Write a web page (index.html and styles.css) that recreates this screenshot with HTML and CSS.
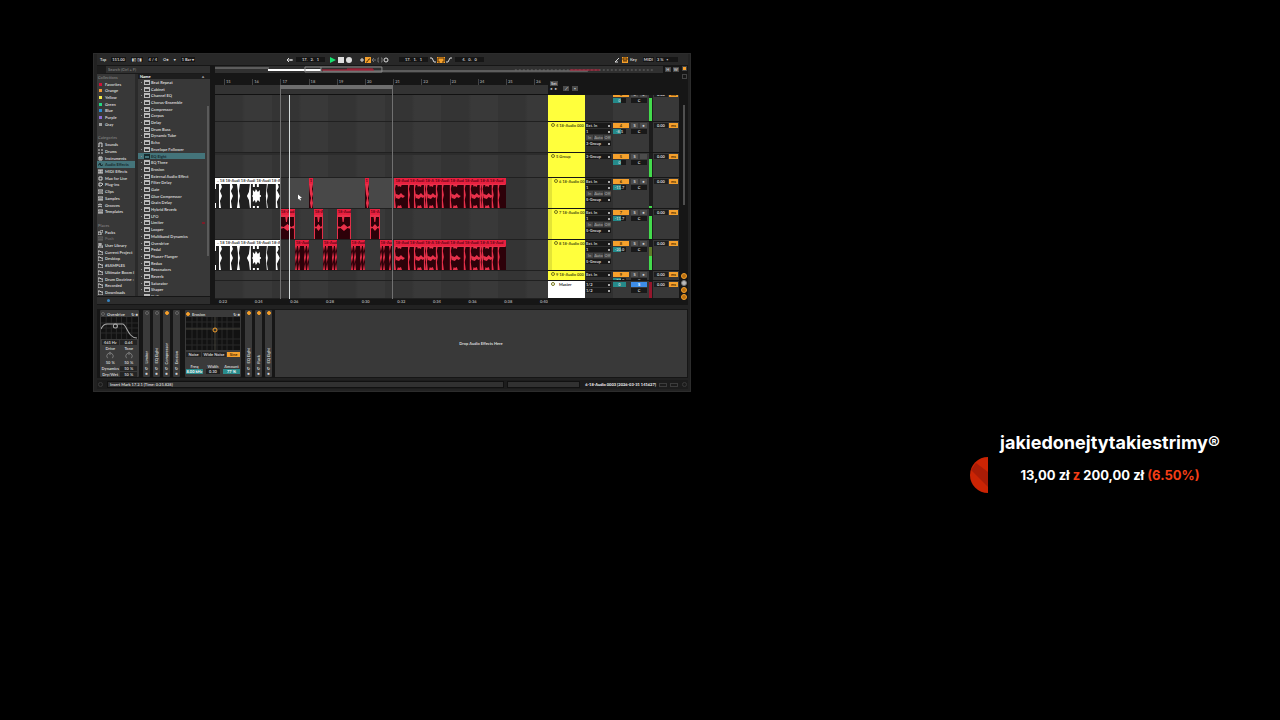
FILE: index.html
```html
<!DOCTYPE html>
<html lang="en">
  <head>
    <meta charset="UTF-8" />
    <meta name="viewport" content="width=device-width, initial-scale=1.0" />
    <title>Stream scene</title>
    <link rel="stylesheet" href="styles.css">
  </head>
  <body>
    <main class="stage">
      <section class="daw">
        <header class="transport">
          <div class="group group-left">
            <button>Tap</button>
            <span class="field">151.00</span>
            <span class="field">▮▯ ▯▮</span>
            <span class="field">4 / 4</span>
            <button>O●</button>
            <span>▾</span>
            <span class="field">1 Bar ▾</span>
          </div>
          <div class="group">
            <button class="tool" aria-label="Follow"><svg viewBox="0 0 6 6"><path d="M0 3h6M2 1L0 3l2 2M4 2v2" /></svg></button>
            <span class="field position">17. &nbsp; 2. &nbsp; 1</span>
            <div class="group play-group">
              <button class="tool" aria-label="Play"><svg viewBox="0 0 6 6"><path class="play" d="M0 0l6 3-6 3z" /></svg></button>
              <button class="tool" aria-label="Stop"><svg viewBox="0 0 6 6"><path class="solid" d="M0 0h6v6H0z" /></svg></button>
              <button class="tool" aria-label="Record"><svg viewBox="0 0 6 6"><circle class="solid" cx="3" cy="3" r="3" /></svg></button>
            </div>
            <div class="group edit-group">
              <button class="tool" aria-label="Overdub"><svg viewBox="0 0 6 6"><path d="M3 1v4M1 3h4" /></svg></button>
              <button class="tool on" aria-label="Automation arm"><svg viewBox="0 0 6 6"><path d="M1 5h1l2-3h1" /></svg></button>
              <button class="tool dim" aria-label="Re-enable"><svg viewBox="0 0 6 6"><path d="M1 3h4M3 1L1 3l2 2" /></svg></button>
              <button class="tool dim" aria-label="Capture"><svg viewBox="0 0 6 6"><path d="M2 1H1v4h1M4 1h1v4H4" /></svg></button>
              <button class="tool" aria-label="Session record"><svg viewBox="0 0 6 6"><circle cx="3" cy="3" r="2" /></svg></button>
            </div>
            <span class="field position loop-start">17. &nbsp; 1. &nbsp; 1</span>
            <div class="group loop-group">
              <button class="tool" aria-label="Punch in"><svg viewBox="0 0 6 6"><path d="M0 1h2l2 4h2" /></svg></button>
              <button class="tool wide on" aria-label="Loop"><svg viewBox="0 0 8 6"><path d="M3 5H1V1h6v4H5" /></svg></button>
              <button class="tool" aria-label="Punch out"><svg viewBox="0 0 6 6"><path d="M0 5h2l2-4h2" /></svg></button>
            </div>
            <span class="field position">4. &nbsp; 0. &nbsp; 0</span>
          </div>
          <div class="group group-right">
            <button class="tool" aria-label="Draw"><svg viewBox="0 0 6 6"><path d="M1 5l4-4M1 5h3" /></svg></button>
            <button class="tool on" aria-label="Computer keyboard"><svg viewBox="0 0 6 6"><path d="M1 1h4v2H1zM2 3v2M4 3v2" /></svg></button>
            <button>Key</button>
            <button class="field midi">MIDI</button>
            <span class="field cpu">3 % &nbsp; ▪</span>
          </div>
        </header>

        <div class="workspace">
          <aside class="browser">
            <input class="search" type="search" aria-label="Search" placeholder="Search (Ctrl + F)">
            <div class="browser-lists">
              <ul class="places">
                <li class="title">Collections</li>
                <li class="c-red"><a href="#">Favorites</a></li>
                <li class="c-orange"><a href="#">Orange</a></li>
                <li class="c-yellow"><a href="#">Yellow</a></li>
                <li class="c-green"><a href="#">Green</a></li>
                <li class="c-blue"><a href="#">Blue</a></li>
                <li class="c-purple"><a href="#">Purple</a></li>
                <li class="c-gray"><a href="#">Gray</a></li>
                <li></li>
                <li class="title">Categories</li>
                <li data-icon="note"><a href="#">Sounds</a></li>
                <li data-icon="pads"><a href="#">Drums</a></li>
                <li data-icon="clock"><a href="#">Instruments</a></li>
                <li data-icon="wave" class="selected"><a href="#">Audio Effects</a></li>
                <li data-icon="keys"><a href="#">MIDI Effects</a></li>
                <li data-icon="disc"><a href="#">Max for Live</a></li>
                <li data-icon="plug"><a href="#">Plug-ins</a></li>
                <li data-icon="clip"><a href="#">Clips</a></li>
                <li data-icon="sample"><a href="#">Samples</a></li>
                <li data-icon="groove"><a href="#">Grooves</a></li>
                <li data-icon="sample"><a href="#">Templates</a></li>
                <li></li>
                <li class="title">Places</li>
                <li data-icon="packs"><a href="#">Packs</a></li>
                <li data-icon="sample" class="off"><a href="#">Push</a></li>
                <li data-icon="user"><a href="#">User Library</a></li>
                <li data-icon="folder"><a href="#">Current Project</a></li>
                <li data-icon="folder"><a href="#">Desktop</a></li>
                <li data-icon="folder"><a href="#">#SAMPLES</a></li>
                <li data-icon="folder"><a href="#">Ultimate Boom I</a></li>
                <li data-icon="folder"><a href="#">Drum Doctrine :</a></li>
                <li data-icon="folder"><a href="#">Recorded</a></li>
                <li data-icon="folder"><a href="#">Downloads</a></li>
              </ul>
              <div class="results">
                <div class="results-head"><span>Name</span><span>▵</span></div>
                <ul class="devices-list">
                  <li><a href="#">Beat Repeat</a></li>
                  <li><a href="#">Cabinet</a></li>
                  <li><a href="#">Channel EQ</a></li>
                  <li><a href="#">Chorus-Ensemble</a></li>
                  <li><a href="#">Compressor</a></li>
                  <li><a href="#">Corpus</a></li>
                  <li><a href="#">Delay</a></li>
                  <li><a href="#">Drum Buss</a></li>
                  <li><a href="#">Dynamic Tube</a></li>
                  <li><a href="#">Echo</a></li>
                  <li><a href="#">Envelope Follower</a></li>
                  <li class="selected"><a href="#">EQ Eight</a></li>
                  <li><a href="#">EQ Three</a></li>
                  <li><a href="#">Erosion</a></li>
                  <li><a href="#">External Audio Effect</a></li>
                  <li><a href="#">Filter Delay</a></li>
                  <li><a href="#">Gate</a></li>
                  <li><a href="#">Glue Compressor</a></li>
                  <li><a href="#">Grain Delay</a></li>
                  <li><a href="#">Hybrid Reverb</a></li>
                  <li><a href="#">LFO</a></li>
                  <li class="favorite"><a href="#">Limiter</a></li>
                  <li><a href="#">Looper</a></li>
                  <li><a href="#">Multiband Dynamics</a></li>
                  <li><a href="#">Overdrive</a></li>
                  <li><a href="#">Pedal</a></li>
                  <li><a href="#">Phaser-Flanger</a></li>
                  <li><a href="#">Redux</a></li>
                  <li><a href="#">Resonators</a></li>
                  <li><a href="#">Reverb</a></li>
                  <li><a href="#">Saturator</a></li>
                  <li><a href="#">Shaper</a></li>
                  <li><a href="#">Shifter</a></li>
                </ul>
              </div>
            </div>
            <div class="preview"><button class="headphone" aria-label="Preview"></button></div>
          </aside>

          <div class="arrangement">
            <div class="overview-row">
              <svg class="overview" viewBox="0 0 448 7" preserveAspectRatio="none">
                <path class="o-line" d="M0 2h54M108 5h36M144 5h229" />
                <path class="o-dots" d="M300 4h140" />
                <path class="o-white" d="M53 4h53" />
                <path class="o-red" d="M107 4h52M132 3h26M355 4h30" />
                <path class="o-frame" d="M90 1h77v5H90zM106 1v5" />
              </svg>
              <button class="mini">H</button>
              <button class="mini">W</button>
            </div>
            <div class="timeline-row">
              <div class="timeline">
                <div class="bars" id="bars"></div>
                <div class="loop-strip"><div class="loop-brace"></div></div>
                <div class="lanes" id="lanes">
                  <div class="loop-area"></div>
                  <div class="playhead"></div>
                  <svg class="pointer" viewBox="0 0 8 12"><path d="M0 0v10l2-2 2 4 2-1-2-4h4z" /></svg>
                </div>
                <div class="seconds" id="seconds"></div>
              </div>
              <div class="mixer">
                <div class="mixer-head">
                  <button class="mini set">Set</button>
                  <div class="locators">
                    <button>◂</button><button>▸</button>
                    <button class="mini pencil">⟋</button><button class="mini">▪</button>
                  </div>
                </div>
                <div class="tracks" id="tracks"></div>
              </div>
            </div>
          </div>

          <div class="rail">
            <div class="rail-top">
              <button class="square on" aria-label="Arrangement view"></button>
              <button class="square" aria-label="Session view"></button>
            </div>
            <div class="rail-scroll"></div>
            <div class="rail-dots">
              <button class="dot on" aria-label="I/O"></button>
              <button class="dot" aria-label="Sends"></button>
              <button class="dot on" aria-label="Mixer"></button>
              <button class="dot on" aria-label="Delay"></button>
            </div>
          </div>
        </div>

        <div class="chain">
          <article class="device overdrive">
            <h2><i class="led"></i>Overdrive<span>↻ ■</span></h2>
            <svg class="scope" viewBox="0 0 36 22" preserveAspectRatio="none">
              <path class="grid" d="M0 6h36M0 11h36M0 16h36M5 0v22M10 0v22M15 0v22M20 0v22M25 0v22M30 0v22" />
              <path class="curve" d="M0 12Q2 7 6 7H21C25 7 26 21 35 21" />
              <circle class="curve" cx="14" cy="9" r="2" />
            </svg>
            <div class="pair"><b>465 Hz</b><b>0.64</b></div>
            <div class="pair"><span>Drive</span><span>Tone</span></div>
            <div class="pair knobs">
              <svg class="knob" viewBox="0 0 10 10"><path d="M2 9A4 4 0 1 1 8 9M5 5V1" /></svg>
              <svg class="knob" viewBox="0 0 10 10"><path d="M2 9A4 4 0 1 1 8 9M5 5V1" /></svg>
            </div>
            <div class="pair"><span>50 %</span><span>50 %</span></div>
            <div class="pair"><span>Dynamics</span><b>50 %</b></div>
            <div class="pair"><span>Dry/Wet</span><b>50 %</b></div>
          </article>
          <article class="slim"><i class="led"></i><h2>Limiter</h2><span>↻</span><span>■</span></article>
          <article class="slim"><i class="led"></i><h2>EQ Eight</h2><span>↻</span><span>■</span></article>
          <article class="slim"><i class="led on"></i><h2>Compressor</h2><span>↻</span><span>■</span></article>
          <article class="slim"><i class="led"></i><h2>Erosion</h2><span>↻</span><span>■</span></article>
          <article class="device erosion">
            <h2><i class="led on"></i>Erosion<span>↻ ■</span></h2>
            <svg class="scope" viewBox="0 0 54 33" preserveAspectRatio="none">
              <path class="grid" d="M0 5h54M0 11h54M0 22h54M0 28h54M6 0v33M11 0v33M16 0v33M21 0v33M26 0v33M31 0v33M36 0v33M41 0v33M47 0v33" />
              <path class="axis" d="M0 12h54M29 0v33" />
              <circle class="handle" cx="29" cy="13" r="2" />
            </svg>
            <div class="modes">
              <button>Noise</button><button>Wide Noise</button><button class="on">Sine</button>
            </div>
            <div class="values">
              <label>Freq<input value="8.00 kHz" class="teal"></label>
              <label>Width<input value="0.30"></label>
              <label>Amount<input value="77 %" class="teal"></label>
            </div>
          </article>
          <article class="slim"><i class="led on"></i><h2>EQ Eight</h2><span>↻</span><span>■</span></article>
          <article class="slim"><i class="led on"></i><h2>Rack</h2><span>↻</span><span>■</span></article>
          <article class="slim"><i class="led on"></i><h2>EQ Eight</h2><span>↻</span><span>■</span></article>
          <div class="drop">Drop Audio Effects Here</div>
        </div>

        <footer class="status">
          <button class="round" aria-label="Info"></button>
          <span class="message">Insert Mark 17.2.1 (Time: 0:25.828)</span>
          <span class="message short"></span>
          <span class="take">6-18-Audio 0003 [2026-03-31 141627]</span>
          <span class="take-icons"><i></i><i></i></span>
          <button class="round" aria-label="Detail view"></button>
        </footer>
      </section>

      <section class="goal">
        <svg class="goal-mark" viewBox="0 0 20 36">
          <path class="disc" d="M19 0A18 18 0 0 0 19 36z" />
          <path class="shade" d="M7 6L19 15V30L2 13z" />
        </svg>
        <div class="goal-text">
          <h1>jakiedonejtytakiestrimy®</h1>
          <p>13,00 zł <em>z</em> 200,00 zł <em>(6.50%)</em></p>
        </div>
      </section>
    </main>
    <script src="script.js"></script>
  </body>
</html>
```
FILE: styles.css
```css
*, *::before, *::after {
  margin: 0;
  padding: 0;
  box-sizing: border-box;
}

body {
  background: #000;
  color: #fff;
  font-family: Inter, "Liberation Sans", sans-serif;
  min-height: 100vh;
}

button, input, select {
  font: inherit;
  color: inherit;
  background: none;
  border: 0;
  border-radius: 0;
  appearance: none;
  line-height: inherit;
}

ul {
  list-style: none;
}

a {
  color: inherit;
  text-decoration: none;
}

.stage {
  display: grid;
  grid-template-columns: 93fr 598fr 278fr 262fr 49fr;
  row-gap: 39px;
  padding-top: 53px;
}

/* ---- window ---- */
.daw {
  grid-column: 2;
  min-width: 0;
  background: #222;
  border: 1px solid #2c2c2c;
  padding: 0 2px 2px 3px;
  font-family: Lato, "Liberation Sans", sans-serif;
  font-size: 4px;
  line-height: 5px;
  font-weight: 700;
  color: #d2d2d2;
  text-rendering: geometricPrecision;
  white-space: nowrap;
}

.transport {
  display: grid;
  grid-template-columns: 190px 1fr auto;
  align-items: center;
  height: 11px;
  background: #282828;
}

.group {
  display: flex;
  align-items: center;
  gap: 2px;
}

.group-left { gap: 5px; padding-left: 3px; }
.group-right { padding-right: 10px; }

.field {
  background: #161616;
  padding: 0 1px;
}

.position {
  width: 29px;
  text-align: center;
  margin: 0 3px 0 1px;
}

.midi { margin-left: 4px; }
.cpu { width: 22px; }
.play-group { margin: 0 5px 0 0; }
.edit-group, .loop-group { gap: 0; }
.loop-start { margin: 0 0 0 8px; }
.loop-group { gap: 1px; }

.tool {
  display: flex;
  width: 6px;
  height: 6px;
}

.tool.wide { width: 8px; }
.tool svg { width: 100%; }
.tool path, .tool circle { fill: none; stroke: #ddd; stroke-width: 1; }
.tool .solid { fill: #ddd; stroke: none; }
.tool .play { fill: #18e070; stroke: none; }
.tool.on { background: #f5a02c; }
.tool.on path { stroke: #5a3300; }
.tool.dim { opacity: .4; }

.workspace {
  display: flex;
  gap: 4px;
  height: 240px;
  background: #161616;
}

/* ---- browser ---- */
.browser {
  width: 114px;
  display: flex;
  flex-direction: column;
  background: #383838;
  border: 1px solid #161616;
  border-width: 1px 1px 1px 0;
}

.search {
  height: 8px;
  background: #303030;
  border-left: 9px solid #1d1d1d;
  border-bottom: 1px solid #1a1a1a;
  padding-left: 2px;
}

.search::placeholder { color: #777; }

.browser-lists {
  flex: 1;
  min-height: 0;
  display: grid;
  grid-template-columns: 41px 1fr;
  grid-template-rows: minmax(0, 1fr);
}

.places {
  display: grid;
  grid-auto-rows: minmax(0, 1fr);
  border-right: 3px solid #2a2a2a;
}

.places li {
  display: flex;
  align-items: center;
  gap: 2px;
  padding-left: 1px;
}

.places li.title { color: #777; }
.places li.off { color: #666; }
.places svg { width: 5px; height: 5px; fill: none; stroke: currentColor; stroke-width: 1; flex: none; }
.places .selected, .devices-list .selected { background: #44747a; color: #16282b; }

.places [class^="c-"]::before {
  content: "";
  width: 3px;
  height: 3px;
  margin: 0 1px;
}

.places .c-red::before { background: #d01035; }
.places .c-orange::before { background: #f09a35; }
.places .c-yellow::before { background: #f3e94a; }
.places .c-green::before { background: #20d883; }
.places .c-blue::before { background: #2a8cd4; }
.places .c-purple::before { background: #8a6cd8; }
.places .c-gray::before { background: #a0a0a0; }

.results {
  display: flex;
  flex-direction: column;
  overflow: hidden;
  background: linear-gradient(#5a5a5a, #5a5a5a) right 1px top 32px / 2px 150px no-repeat;
}

.results-head {
  display: flex;
  justify-content: space-between;
  background: #1d1d1d;
  padding: 0 6px 0 2px;
}

.results-head span:first-child { color: #fff; }

.devices-list {
  flex: 1;
  min-height: 0;
  display: grid;
  grid-auto-rows: minmax(0, 1fr);
  margin: 0 5px -4px 0;
}

.devices-list li {
  display: flex;
  align-items: center;
  gap: 2px;
  padding-left: 3px;
}

.devices-list li::before {
  content: "";
  width: 1px;
  height: 1px;
  background: #888;
}

.devices-list a {
  display: flex;
  align-items: center;
  gap: 1px;
}

.devices-list a::before {
  content: "";
  width: 6px;
  height: 5px;
  border: 1px solid #bbb;
  border-top-width: 2px;
}

.devices-list .selected a::before { border-color: #16282b; }

.devices-list .favorite::after {
  content: "";
  width: 3px;
  height: 2px;
  margin-left: auto;
  background: #7c1c28;
}

.preview {
  position: relative;
  z-index: 1;
  height: 8px;
  border-top: 1px solid #161616;
  background: #2d2d2d;
  padding: 2px 10px;
}

.headphone {
  display: block;
  width: 3px;
  height: 3px;
  border-radius: 50%;
  background: #3585c4;
}

/* ---- arrangement ---- */
.arrangement {
  flex: 1;
  min-width: 0;
}

.overview-row {
  display: flex;
  align-items: center;
  gap: 2px;
  height: 9px;
}

.overview {
  flex: 1;
  min-width: 0;
  height: 7px;
  background: #303030;
}

.overview path { fill: none; }
.o-line { stroke: #8a8a8a; }
.o-dots { stroke: #6a6a6a; stroke-dasharray: 2 2; }
.o-white { stroke: #fff; stroke-width: 2; }
.o-red { stroke: #c11c38; }
.o-frame { stroke: #8b8b8b; }

.mini {
  min-width: 6px;
  background: #4a4a4a;
  padding: 0 1px;
}

.timeline-row {
  display: grid;
  grid-template-columns: 1fr 131px;
}

.timeline { min-width: 0; overflow: hidden; }

.bars {
  display: grid;
  grid-auto-flow: column;
  grid-auto-columns: 8.7%;
  height: 11px;
  padding: 5px 0 0 9px;
  color: #999;
}

.bars span { border-left: 1px solid #444; padding-left: 1px; }

.loop-strip {
  height: 10px;
  background: #333;
  border-bottom: 1px solid #111;
  padding: 0 46.5% 0 19.5%;
}

.loop-brace { height: 4px; background: #6e6e6e; }

.lanes, .tracks {
  display: grid;
  grid-template-rows: 27px 31px 25px 31px 31px 31px 10px 18px;
}

.lanes {
  position: relative;
  background: repeating-linear-gradient(90deg, #343434 0 8%, #393939 9% 17%);
}

.lane {
  position: relative;
  border-bottom: 1px solid #202020;
}

.lane.active {
  background: linear-gradient(90deg, transparent 22%, #484848 22% 54%, transparent 54%);
}

.lane.group-lane { border-top: 2px solid #2c2c2c; }

.clip {
  position: absolute;
  top: 0;
  bottom: 0;
  display: flex;
  flex-direction: column;
  overflow: hidden;
}

.clip-name { height: 6px; overflow: hidden; padding-left: 1px; }
.clip svg { flex: 1; min-height: 0; width: 100%; }
.clip.white .clip-name { background: #fff; color: #333; padding-left: 2px; }
.clip.white svg { background: #202020; fill: #fff; }
.clip.red .clip-name { background: #e8203f; color: #5c0414; }
.clip.red svg { background: #2d0109; fill: #e8304a; }

.loop-area {
  position: absolute;
  z-index: 1;
  top: -10px;
  bottom: 0;
  left: 19.5%;
  right: 46.5%;
  border: 1px solid #707070;
  border-width: 0 1px;
}

.playhead {
  position: absolute;
  z-index: 2;
  top: 0;
  bottom: 0;
  left: 22.2%;
  width: 1px;
  background: #d5dcdc;
}

.pointer {
  position: absolute;
  z-index: 2;
  left: 25%;
  top: 99px;
  width: 4px;
  height: 7px;
  fill: #fff;
}

.seconds {
  display: flex;
  justify-content: space-between;
  padding: 0 0 0 4px;
  color: #aaa;
}

/* ---- mixer ---- */
.mixer-head {
  height: 21px;
  padding: 7px 2px 0;
}

.mixer-head .set { display: block; }
.locators { display: flex; gap: 3px; }
.locators .pencil { margin-left: 3px; }

.track {
  display: grid;
  grid-template-columns: 37px 28px 36px 4px 26px;
  border-bottom: 1px solid #161616;
  overflow: hidden;
  background: #383838;
}

.track-name {
  display: flex;
  align-items: flex-start;
  gap: 1px;
  background: #ffff3c;
  color: #4a4a10;
  padding: 1px 0 0 3px;
  overflow: hidden;
}

.track-name::before {
  content: "";
  flex: none;
  width: 4px;
  height: 4px;
  border: 1px solid #77771c;
  border-radius: 50%;
}

.scrolled .track-name::before { display: none; }
.nested .track-name { border-left: 4px solid #e4e436; padding-left: 2px; }
.master .track-name { background: #fff; color: #333; gap: 4px; }

.io {
  display: flex;
  flex-direction: column;
  gap: 1px;
  padding: 1px 2px 0 1px;
  background: #303030;
}

.io select {
  width: 100%;
  height: 5px;
  flex: none;
  background: #191919 linear-gradient(#aaa, #aaa) right 1px center / 2px 2px no-repeat;
}

.monitor { display: flex; gap: 1px; }
.monitor button { background: #454545; color: #999; flex: 1; }

.controls {
  display: grid;
  grid-template-columns: 16px 7px 7px;
  grid-auto-rows: 5px;
  align-content: start;
  gap: 1px 2px;
  padding: 1px 0 0;
}

.controls button { background: #4c4c4c; }
.controls .arm { background: #f5a02c; color: #4a2c00; }
.controls .vol { background: linear-gradient(90deg, #258a8a 65%, #191919 65%); text-align: center; width: 13px; }
.controls .pan { background: #191919; text-align: center; grid-column: 2 / 4; }
.controls .teal-on { background: #258a8a; width: 13px; }
.controls .solo { background: #3d8de8; color: #fff; grid-column: 2 / 4; }

.meter {
  display: flex;
  align-items: flex-end;
  background: #1c1c1c;
  padding: 0 1px 0 0;
}

.meter i {
  flex: 1;
  background: #43db4c;
}

.meter.hot i { background: linear-gradient(#5f7a28 40%, #43db4c 40%); }
.master .meter i { background: #96162c; }

.delay {
  display: flex;
  align-items: flex-start;
  gap: 1px;
  padding: 1px 1px 0 1px;
}

.delay span { flex: 1; background: #1e1e1e; text-align: center; color: #ddd; }
.delay button { background: #f5a02c; color: #4a2c00; width: 9px; }
.scrolled .controls, .scrolled .delay { margin-top: -4px; }

.rail {
  width: 8px;
  display: flex;
  flex-direction: column;
  align-items: center;
  justify-content: space-between;
  padding: 1px 0 5px;
  margin-left: -3px;
}

.rail-top { display: grid; gap: 3px; }
.square { width: 5px; height: 5px; border: 1px solid #444; }
.square.on { background: #f5a02c; }
.rail-scroll { width: 2px; height: 100px; background: #4f4f4f; margin-bottom: 43px; }
.rail-dots { display: grid; gap: 1px; }
.dot { width: 6px; height: 6px; border-radius: 50%; border: 1px solid #777; background: #bbb; }
.dot.on { border-color: #f5a02c; background: #b86f10; }

/* ---- devices ---- */
.chain {
  display: flex;
  gap: 3px;
  margin-top: 4px;
  padding: 1px 1px 1px 3px;
  height: 69px;
  background: #161616;
}

.device, .slim { background: #3a3a3a; border-radius: 1px; overflow: hidden; flex: none; }
.device { padding: 1px 1px 0; }
.overdrive { width: 39px; margin-right: 1px; }
.erosion { width: 56px; margin: 0 1px 0 2px; }
h2 { font-size: 4px; font-weight: 700; }
.device h2 { display: flex; align-items: center; gap: 2px; height: 6px; }
.device h2 span { margin-left: auto; }

.led {
  width: 4px;
  height: 4px;
  flex: none;
  border-radius: 50%;
  border: 1px solid #666;
}

.led.on { background: #f5a02c; border-color: #f5a02c; }

.scope { display: block; width: 100%; height: 22px; background: #121212; }
.erosion .scope { height: 33px; }
.scope path, .scope circle { fill: none; }
.grid { stroke: #292929; }
.axis { stroke: #44433a; }
.curve { stroke: #aaa; }
.handle { stroke: #f5a02c; }

.pair {
  display: grid;
  grid-template-columns: 1fr 1fr;
  justify-items: center;
  margin-top: 1px;
}

.pair.knobs { margin: 0; }
.pair b { background: #242424; font-weight: 700; width: 90%; text-align: center; }
.knob { width: 10px; height: 8px; fill: none; stroke: #888; }

.slim {
  width: 7px;
  display: flex;
  flex-direction: column;
  align-items: center;
  padding: 1px 0;
}

.slim h2 {
  writing-mode: vertical-rl;
  transform: rotate(180deg);
  margin-top: auto;
  margin-bottom: 2px;
}

.modes { display: grid; grid-template-columns: 15px 1fr 13px; gap: 1px; margin-top: 2px; }
.modes button { background: #242424; }
.modes .on { background: #f5a02c; color: #4a2c00; }
.values { display: grid; grid-template-columns: 17px 14px 17px; justify-content: space-between; margin-top: 7px; }
.values label { text-align: center; }
.values input { display: block; width: 100%; text-align: center; background: #1e1e1e; height: 5px; }
.values .teal { background: #2a8c8c; color: #fff; }

.drop {
  flex: 1;
  display: flex;
  align-items: center;
  justify-content: center;
  background: #393939;
  color: #ddd;
}

.status {
  display: flex;
  align-items: center;
  gap: 3px;
  margin-top: 2px;
  height: 9px;
  background: #1c1c1c;
}

.message { flex: 409 0 0; background: #313131; border: 1px solid #111; padding: 0 2px; height: 7px; }
.message.short { flex: 71 0 0; }
.take { color: #fff; margin-left: 2px; }
.take-icons { display: flex; gap: 3px; }
.take-icons i { width: 8px; height: 4px; border: 1px solid #3c3c3c; }
.round { width: 5px; height: 5px; border-radius: 50%; border: 1px solid #3a3a3a; margin: 0 1px; }

/* ---- donation goal ---- */
.goal {
  grid-column: 4;
  grid-row: 2;
  display: grid;
  grid-template-columns: 20px 1fr;
  align-items: end;
}

.goal-mark { width: 20px; height: 36px; }
.disc { fill: #cb2404; }
.shade { fill: #a91c06; }

.goal-text { text-align: center; white-space: nowrap; padding-bottom: 8px; }

h1 {
  font-size: 18px;
  line-height: 24px;
  font-weight: 700;
}

.goal p {
  margin-top: 10px;
  font-size: 13px;
  line-height: 20px;
  font-weight: 700;
}

.goal em { font-style: normal; color: #f43e16; }
```
FILE: script.js
```js
// Icons for the browser sidebar
const icons = {
  note: 'M1 5V1h3v4M0 5h1M3 5h1',
  pads: 'M0 1h2M3 1h2M0 4h2M3 4h2',
  clock: 'M1 1h3v3H1zM2 1v2h1',
  wave: 'M0 3h1l1-2 1 3 1-1h1',
  keys: 'M0 1h5v3H0zM2 1v3M3 1v3',
  disc: 'M1 1h3v3H1z',
  plug: 'M1 1h2l2 1-2 2H1z',
  clip: 'M0 1h5v4H0zM1 3h3',
  sample: 'M0 1h5v3H0zM1 3h3',
  groove: 'M0 2l2-1 2 1M0 4l2-1 2 1',
  packs: 'M0 2h3v3H0zM2 0h3v3',
  user: 'M1 0h2v2H1zM0 5V3h5v2z',
  folder: 'M0 1h2l1 1h2v3H0z'
};

document.querySelectorAll('[data-icon]').forEach((li) => {
  li.insertAdjacentHTML('afterbegin', `<svg viewBox="0 0 5 5"><path d="${icons[li.dataset.icon]}"/></svg>`);
});

// Rulers
const bars = document.getElementById('bars');
for (let i = 15; i <= 26; i++) {
  bars.innerHTML += `<span>${i}</span>`;
}
const seconds = document.getElementById('seconds');
for (let s = 22; s <= 40; s += 2) {
  seconds.innerHTML += `<span>0:${s}</span>`;
}

// Clips: [colour, start, end, name], on a timeline 334 units long
const timelineLength = 334;
const longName = '18-Aud 18-Audi 18-A 18-Audi 18-Aud 18-Audi 18-A 18-Aud';
const whiteName = '.. 18 18-Audi 18-Audi 18-Audi 18-Au';
const clips = {
  3: [['white', 0, 65, whiteName], ['red', 94, 98, '1'], ['red', 150, 154, '1'], ['red', 180, 292, longName]],
  4: [['red', 65, 80, '18-Aud'], ['red', 99, 108, '18-A'], ['red', 122, 136, '18-Aud'], ['red', 155, 165, '18-A']],
  5: [['white', 0, 65, whiteName], ['red', 80, 94, '18-Aud'], ['red', 108, 122, '18-Aud'], ['red', 136, 150, '18-Aud'],
    ['red', 165, 179, '18-Aud'], ['red', 180, 292, longName]]
};

function hit(x) {
  return `M${x} 0h2l1 3l-2 4l2 5l-2 5l1 7h-2z`;
}

function whiteWave() {
  return hit(4) + 'M0 0h1v5H0zM0 19h1v5H0z' +
    hit(15) + 'M22 0h3l-1 7l1 5l-1 5l1 7h-3l1-7v-10z' +
    'M35 0h1v24h-1l-1-8l-2-4l2-4z' +
    'M38 6l2 2l1-3l2 3l2-2v5h1v2h-1v5l-2-2l-2 3l-1-3l-2 2v-5l-1-1l1-1zM38 0h2v3h-2zM42 0h2v3h-2zM38 22h2v2h-2zM42 22h2v2h-2z' +
    'M52 0h1l-1 7l1 5l-1 5l1 7h-1l-1-12z' + hit(61) + 'M61 4l4 8l-4 8z';
}

// One bar-long take: body with a pinch in the middle
function shortWave(width) {
  const w = width;
  return `M0 0h${w}v2h-${w}zM0 0h1v24H0zM${w - 1} 0h1v24h-1zM0 11l${w / 4} 1l${w / 4}-3l${w / 4} 3l${w / 4}-2v4l-${w / 4}-1l-${w / 4} 3l-${w / 4}-3l-${w / 4} 1z` +
    `M${w / 3} 0h3l-1 7h-1z`;
}

// Chopped take: vertical transients
function stripes(width) {
  let d = '';
  [0, 3, 9, width - 2].forEach((x) => {
    d += `M${x} 0h2l-1 5l1 6l-1 5l1 8h-2l1-6l-1-6l1-6z`;
  });
  return d;
}

function longWave(width) {
  let d = `M0 0h${width}v1H0z`;
  for (let x = 0, i = 0; x < width; i++) {
    d += `M${x} 0h2l-1 5l1 6l-1 5l1 8h-2z`;
    const step = [14, 6, 10, 2, 10, 6, 8][i % 7];
    if (step > 8 && x + step < width) {
      d += `M${x + 2} 10l3 1l2-2l2 2l2 1l-2 2l-2-1l-2 2l-3-1z`;
      d += `M${x + 3} 0h5l-1 3l-2-1l-1 1zM${x + 3} 24h5l-1-3l-2 1l-1-1z`;
    }
    x += step;
  }
  return d;
}

function wave(colour, width, row) {
  if (colour === 'white') return whiteWave();
  if (width < 6) return 'M0 0h4l-1 5l1 5l-1 4l1 5l-1 5h-1l-1-5l1-5l-1-4z';
  if (width > 20) return longWave(width);
  return row === 4 ? shortWave(width) : stripes(width);
}

const lanes = document.getElementById('lanes');
for (let row = 0; row < 8; row++) {
  const lane = document.createElement('div');
  lane.className = 'lane' + (row === 3 ? ' active' : '') + (row === 2 ? ' group-lane' : '');
  (clips[row] || []).forEach(([colour, start, end, name]) => {
    const width = end - start;
    const left = start / timelineLength * 100;
    lane.innerHTML += `<div class="clip ${colour}" style="left:${left}%;width:${width / timelineLength * 100}%">
      <span class="clip-name">${name}</span>
      <svg viewBox="0 0 ${width} 24" preserveAspectRatio="none"><path d="${wave(colour, width, row)}"/></svg>
    </div>`;
  });
  lanes.appendChild(lane);
}

// Mixer rows
const tracks = [
  { name: '', cls: 'scrolled', vol: '0', num: '3', meter: 90, bare: true },
  { name: '4 18-Audio 000', num: '4', vol: '-8.5', meter: 0 },
  { name: '5 Group', cls: 'group-track', num: '5', vol: '0', meter: 76, group: true },
  { name: '6 18-Audio 00', cls: 'nested', num: '6', vol: '-11.7', meter: 8 },
  { name: '7 18-Audio 00', cls: 'nested', num: '7', vol: '-11.7', meter: 76 },
  { name: '8 18-Audio 00', cls: 'nested', num: '8', vol: '-20.0', meter: 76, hot: true },
  { name: '9 18-Audio 000', num: '9', vol: '-84.3', meter: 0, short: true },
  { name: 'Master', cls: 'master', vol: '0', meter: 96, master: true }
];

function chooser(label, value) {
  return `<select aria-label="${label}"><option>${value}</option></select>`;
}

function io(t) {
  if (t.bare) return '';
  if (t.group) return chooser('Output', '3-Group');
  if (t.master) return chooser('Cue out', '1/2') + chooser('Master out', '1/2');
  if (t.short) return chooser('Input', 'Ext. In');
  return chooser('Input', 'Ext. In') + chooser('Channel', '1') +
    '<div class="monitor"><button>In</button><button>Auto</button><button>Off</button></div>' +
    chooser('Output', t.cls === 'nested' ? '5-Group' : '3-Group');
}

document.getElementById('tracks').innerHTML = tracks.map((t) => `
  <div class="track ${t.cls || ''}">
    <div class="track-name">${t.name}</div>
    <div class="io">${io(t)}</div>
    <div class="controls">
      ${t.master
    ? '<button class="teal-on">0</button><button class="solo">S</button><span></span><span class="pan">C</span>'
    : `<button class="arm">${t.num}</button><button>S</button><button>${t.group ? '' : '●'}</button>
      <span class="vol">${t.vol}</span><span class="pan">C</span>`}
    </div>
    <div class="meter ${t.hot ? 'hot' : ''}"><i style="height:${t.meter}%"></i></div>
    <div class="delay"><span>0.00</span><button>ms</button></div>
  </div>`).join('');
```
